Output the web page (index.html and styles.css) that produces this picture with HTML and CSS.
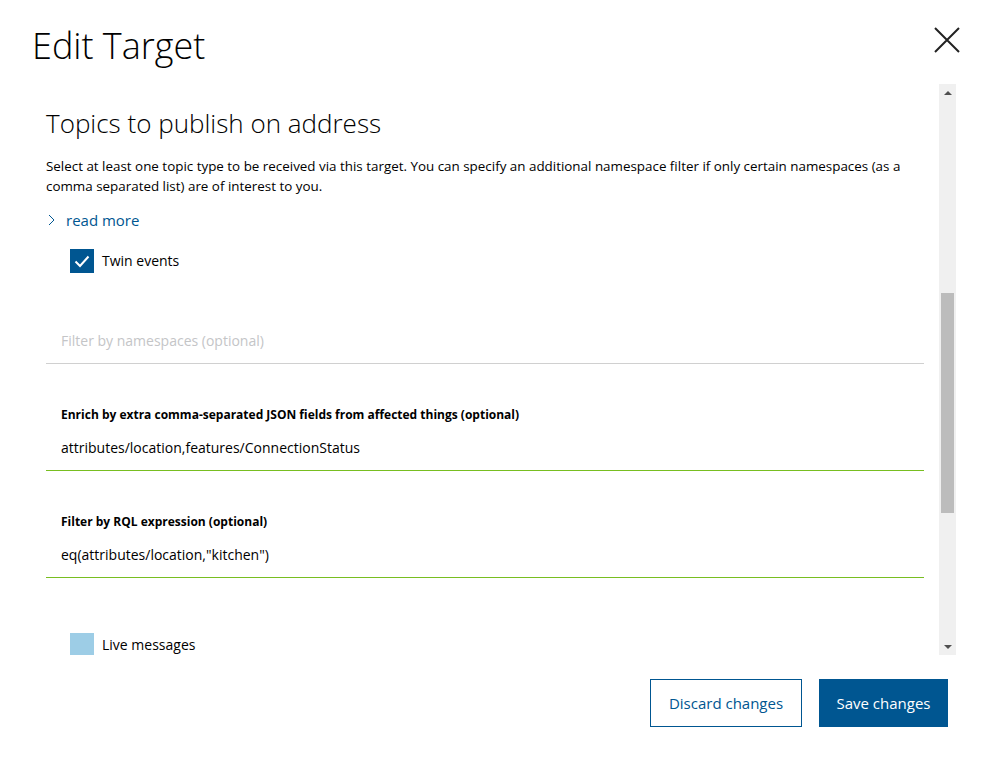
FILE: index.html
```html
<!DOCTYPE html>
<html>
<head>
<meta charset="utf-8">
<link rel="stylesheet" href="styles.css">
</head>
<body>
<div class="dialog">
  <header class="head">
    <h1 class="title">Edit Target</h1>
    <button class="close" aria-label="Close">
      <svg width="26" height="26" viewBox="0 0 26 26"><path d="M1 1 L25 25 M25 1 L1 25" stroke="#222" stroke-width="2" fill="none"/></svg>
    </button>
  </header>
  <div class="body">
    <div class="content">
      <h2 class="section">Topics to publish on address</h2>
      <p class="desc">Select at least one topic type to be received via this target. You can specify an additional namespace filter if only certain namespaces (as a comma separated list) are of interest to you.</p>
      <div class="more">
        <svg width="7" height="12" viewBox="0 0 7 12"><path d="M1 1 L6 6 L1 11" stroke="#005691" stroke-width="1" fill="none"/></svg>
        <span>read more</span>
      </div>
      <label class="check first">
        <span class="box on"><svg width="24" height="24" viewBox="0 0 24 24"><path d="M5.5 12.5 L10 17 L18.5 7.5" stroke="#fff" stroke-width="2" fill="none"/></svg></span>
        <span>Twin events</span>
      </label>
      <div class="field empty">
        <div class="value placeholder">Filter by namespaces (optional)</div>
      </div>
      <div class="field filled">
        <div class="label">Enrich by extra comma-separated JSON fields from affected things (optional)</div>
        <div class="value">attributes/location,features/ConnectionStatus</div>
      </div>
      <div class="field filled">
        <div class="label">Filter by RQL expression (optional)</div>
        <div class="value">eq(attributes/location,"kitchen")</div>
      </div>
      <label class="check live">
        <span class="box off"></span>
        <span class="live-text">Live messages</span>
      </label>
    </div>
    <div class="scrollbar">
      <div class="arrow up"></div>
      <div class="track"><div class="thumb"></div></div>
      <div class="arrow down"></div>
    </div>
  </div>
  <footer class="foot">
    <button class="btn secondary">Discard changes</button>
    <button class="btn primary">Save changes</button>
  </footer>
</div>
</body>
</html>
```

FILE: styles.css
```css
* { box-sizing: border-box; }
html, body { margin: 0; padding: 0; background: #fff; }
body {
  font-family: "Open Sans", "Noto Sans", sans-serif;
  color: #000;
  width: 988px;
  height: 762px;
  overflow: hidden;
}
.dialog {
  padding: 0 32px;
  display: flex;
  flex-direction: column;
}
.head {
  height: 84px;
  display: flex;
  justify-content: space-between;
  align-items: flex-start;
}
.title {
  margin: 22px 0 0 0;
  font-size: 36px;
  line-height: 48px;
  font-weight: 300;
}
.close {
  margin: 27px -4px 0 0;
  padding: 0;
  border: 0;
  background: none;
  width: 26px;
  height: 26px;
}
.body {
  height: 571px;
  display: flex;
}
.content {
  flex: 1;
  overflow: hidden;
  padding: 0 15px 0 14px;
}
.section {
  margin: 21px 0 0 0;
  font-size: 26px;
  line-height: 36px;
  font-weight: 300;
}
.desc {
  margin: 15px 0 0 0;
  font-size: 13.4px;
  line-height: 20px;
}
.more {
  margin-top: 14px;
  display: flex;
  align-items: center;
  gap: 11px;
  color: #005691;
  font-size: 15px;
  line-height: 20px;
  padding-left: 2px;
}
.check {
  display: flex;
  align-items: center;
  gap: 8px;
  margin: 19px 0 0 24px;
  font-size: 14px;
  line-height: 24px;
}
.box {
  width: 24px;
  height: 24px;
  display: block;
  flex: none;
}
.box svg { display: block; }
.box.on { background: #005691; }
.box.off { background: #9dcde6; }
.field {
  padding: 0 15px;
  border-bottom: 1px solid #d0d0d0;
}
.field.empty {
  margin-top: 37px;
  height: 54px;
  padding-top: 21px;
}
.field.filled {
  border-bottom-color: #78be20;
  height: 107px;
  padding-top: 43px;
}
.label {
  font-size: 12px;
  font-weight: 700;
  line-height: 16px;
}
.value {
  font-size: 14px;
  line-height: 20px;
  margin-top: 15px;
}
.value.placeholder {
  margin-top: 0;
  color: #c4c5c7;
}
.check.live { margin-top: 55px; }
.live-text { line-height: 18px; }
.scrollbar {
  width: 17px;
  background: #f0f0f0;
  display: flex;
  flex-direction: column;
}
.arrow {
  height: 17px;
  display: flex;
  align-items: center;
  justify-content: center;
}
.arrow::before {
  content: "";
  width: 0;
  height: 0;
  border-left: 4px solid transparent;
  border-right: 4px solid transparent;
}
.arrow.up::before { border-bottom: 4px solid #505050; }
.arrow.down::before { border-top: 4px solid #505050; }
.track {
  flex: 1;
  padding: 192px 2px 125px 2px;
  display: flex;
}
.thumb {
  flex: 1;
  background: #bcbcbc;
}
.foot {
  display: flex;
  justify-content: flex-end;
  gap: 17px;
  margin-top: 24px;
  padding-right: 8px;
}
.btn {
  height: 48px;
  font-family: inherit;
  font-size: 15px;
  padding: 0 16px;
  border: 1px solid #005691;
}
.btn.secondary { background: #fff; color: #005691; width: 152px; }
.btn.primary { background: #005691; color: #fff; width: 129px; }
```
